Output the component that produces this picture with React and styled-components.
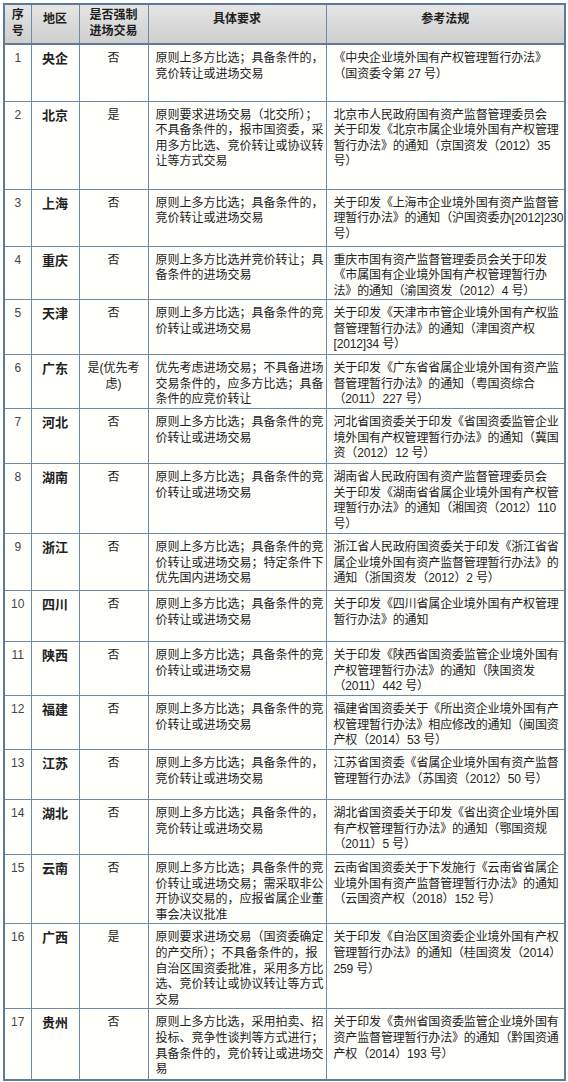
import React from 'react';
import styled, { createGlobalStyle } from 'styled-components';

const GlobalStyle = createGlobalStyle`
  html, body {
    margin: 0;
    padding: 0;
    background: #ffffff;
  }
`;

// 每行：序号、地区、是否强制、具体要求、参考法规、行高
const filas = [
  { n: 1, region: '央企', forzado: ['否'], h: 57,
    req: ['原则上多方比选；具备条件的，', '竞价转让或进场交易'],
    ley: ['《中央企业境外国有产权管理暂行办法》', '（国资委令第 27 号）'] },
  { n: 2, region: '北京', forzado: ['是'], h: 88,
    req: ['原则要求进场交易（北交所）；', '不具备条件的，报市国资委，采', '用多方比选、竞价转让或协议转', '让等方式交易'],
    ley: ['北京市人民政府国有资产监督管理委员会', '关于印发《北京市属企业境外国有产权管理', '暂行办法》的通知（京国资发（2012）35', '号）'] },
  { n: 3, region: '上海', forzado: ['否'], h: 57,
    req: ['原则上多方比选；具备条件的，', '竞价转让或进场交易'],
    ley: ['关于印发《上海市企业境外国有资产监督管', '理暂行办法》的通知（沪国资委办[2012]230', '号）'] },
  { n: 4, region: '重庆', forzado: ['否'], h: 53,
    req: ['原则上多方比选并竞价转让；具', '备条件的进场交易'],
    ley: ['重庆市国有资产监督管理委员会关于印发', '《市属国有企业境外国有产权管理暂行办', '法》的通知（渝国资发（2012）4 号）'] },
  { n: 5, region: '天津', forzado: ['否'], h: 55,
    req: ['原则上多方比选；具备条件的竞', '价转让或进场交易'],
    ley: ['关于印发《天津市市管企业境外国有产权监', '督管理暂行办法》的通知（津国资产权', '[2012]34 号）'] },
  { n: 6, region: '广东', forzado: ['是(优先考', '虑)'], h: 54,
    req: ['优先考虑进场交易；不具备进场', '交易条件的，应多方比选；具备', '条件的应竞价转让'],
    ley: ['关于印发《广东省省属企业境外国有资产监', '督管理暂行办法》的通知（粤国资综合', '（2011）227 号）'] },
  { n: 7, region: '河北', forzado: ['否'], h: 55,
    req: ['原则上多方比选；具备条件的竞', '价转让或进场交易'],
    ley: ['河北省国资委关于印发《省国资委监管企业', '境外国有产权管理暂行办法》的通知（冀国', '资（2012）12 号）'] },
  { n: 8, region: '湖南', forzado: ['否'], h: 70,
    req: ['原则上多方比选；具备条件的竞', '价转让或进场交易'],
    ley: ['湖南省人民政府国有资产监督管理委员会', '关于印发《湖南省省属企业境外国有产权管', '理暂行办法》的通知（湘国资（2012）110', '号）'] },
  { n: 9, region: '浙江', forzado: ['否'], h: 57,
    req: ['原则上多方比选；具备条件的竞', '价转让或进场交易；特定条件下', '优先国内进场交易'],
    ley: ['浙江省人民政府国资委关于印发《浙江省省', '属企业境外国有资产监督管理暂行办法》的', '通知（浙国资发（2012）2 号）'] },
  { n: 10, region: '四川', forzado: ['否'], h: 51,
    req: ['原则上多方比选；具备条件的竞', '价转让或进场交易'],
    ley: ['关于印发《四川省属企业境外国有产权管理', '暂行办法》的通知'] },
  { n: 11, region: '陕西', forzado: ['否'], h: 54,
    req: ['原则上多方比选；具备条件的竞', '价转让或进场交易'],
    ley: ['关于印发《陕西省国资委监管企业境外国有', '产权管理暂行办法》的通知（陕国资发', '（2011）442 号）'] },
  { n: 12, region: '福建', forzado: ['否'], h: 53,
    req: ['原则上多方比选；具备条件的竞', '价转让或进场交易'],
    ley: ['福建省国资委关于《所出资企业境外国有产', '权管理暂行办法》相应修改的通知（闽国资', '产权（2014）53 号）'] },
  { n: 13, region: '江苏', forzado: ['否'], h: 50,
    req: ['原则上多方比选；具备条件的，', '竞价转让或进场交易'],
    ley: ['江苏省国资委《省属企业境外国有资产监督', '管理暂行办法》（苏国资（2012）50 号）'] },
  { n: 14, region: '湖北', forzado: ['否'], h: 55,
    req: ['原则上多方比选；具备条件的，', '竞价转让或进场交易'],
    ley: ['湖北省国资委关于印发《省出资企业境外国', '有产权管理暂行办法》的通知（鄂国资规', '（2011）5 号）'] },
  { n: 15, region: '云南', forzado: ['否'], h: 69,
    req: ['原则上多方比选；具备条件的竞', '价转让或进场交易；需采取非公', '开协议交易的，应报省属企业董', '事会决议批准'],
    ley: ['云南省国资委关于下发施行《云南省省属企', '业境外国有资产监督管理暂行办法》的通知', '（云国资产权（2018）152 号）'] },
  { n: 16, region: '广西', forzado: ['是'], h: 84,
    req: ['原则要求进场交易（国资委确定', '的产交所）；不具备条件的，报', '自治区国资委批准，采用多方比', '选、竞价转让或协议转让等方式', '交易'],
    ley: ['关于印发《自治区国资委企业境外国有产权', '管理暂行办法》的通知（桂国资发（2014）', '259 号）'] },
  { n: 17, region: '贵州', forzado: ['否'], h: 71,
    req: ['原则上多方比选，采用拍卖、招', '投标、竞争性谈判等方式进行；', '具备条件的，竞价转让或进场交', '易'],
    ley: ['关于印发《贵州省国资委监管企业境外国有', '资产监督管理暂行办法》的通知（黔国资通', '产权（2014）193 号）'] },
];

const anchos = [27, 48, 69, 178, 239];

export default function App() {
  return (
    <Pagina>
      <GlobalStyle />
      <Tabla>
        <colgroup>
          {anchos.map((w, i) => (
            <col key={i} style={{ width: w }} />
          ))}
        </colgroup>
        <thead>
          <FilaEncabezado>
            <Encabezado $pad={2}><Linea>序</Linea><Linea>号</Linea></Encabezado>
            <Encabezado $pad={6}>地区</Encabezado>
            <Encabezado $pad={2}><Linea>是否强制</Linea><Linea>进场交易</Linea></Encabezado>
            <Encabezado $pad={6}>具体要求</Encabezado>
            <Encabezado $pad={6}>参考法规</Encabezado>
          </FilaEncabezado>
        </thead>
        <tbody>
          {filas.map((f) => (
            <Fila key={f.n} $h={f.h}>
              <Celda $align="center" $num>{f.n}</Celda>
              <Celda $align="center" $bold>{f.region}</Celda>
              <Celda $align="center">
                {f.forzado.map((t, i) => <Linea key={i}>{t}</Linea>)}
              </Celda>
              <Celda>
                {f.req.map((t, i) => <Linea key={i}>{t}</Linea>)}
              </Celda>
              <Celda $pl={7} $tight>
                {f.ley.map((t, i) => <Linea key={i}>{t}</Linea>)}
              </Celda>
            </Fila>
          ))}
        </tbody>
      </Tabla>
    </Pagina>
  );
}

const Pagina = styled.div`
  padding: 3px 0 0 3px;
  width: 568px;
  min-height: 1082px;
  box-sizing: border-box;
  background: #ffffff;
  font-family: 'Liberation Sans', 'Noto Sans CJK SC', sans-serif;
  color: #222222;
`;

const Tabla = styled.table`
  width: 561px;
  table-layout: fixed;
  border-collapse: collapse;
  border: 2px solid #5d7b97;
`;

const FilaEncabezado = styled.tr`
  height: 40px;
`;

const Encabezado = styled.th`
  padding: ${(p) => p.$pad}px 1px 0;
  vertical-align: top;
  text-align: center;
  font-size: 12px;
  line-height: 16px;
  font-weight: bold;
  color: #1e1e1e;
  background: linear-gradient(180deg, #e6e6e6 0%, #d8d8d8 55%, #cfcfcf 100%);
  border: 1px solid #6f8aa5;
  border-bottom: 2px solid #5d7b97;
`;

const Fila = styled.tr`
  height: ${(p) => p.$h}px;
`;

const Celda = styled.td`
  padding: 6px 1px 0 ${(p) => p.$pl || (p.$align === 'center' ? 1 : 7)}px;
  vertical-align: top;
  text-align: ${(p) => p.$align || 'left'};
  font-size: ${(p) => (p.$bold ? '13px' : '12px')};
  font-weight: ${(p) => (p.$bold ? 'bold' : 'normal')};
  letter-spacing: ${(p) => (p.$tight ? '-0.15px' : '0')};
  line-height: 15.6px;
  color: ${(p) => (p.$num ? '#444' : '#222')};
  background: #fffffc;
  border: 1px solid #6f8aa5;
  overflow: hidden;
`;

const Linea = styled.div`
  white-space: nowrap;
`;
